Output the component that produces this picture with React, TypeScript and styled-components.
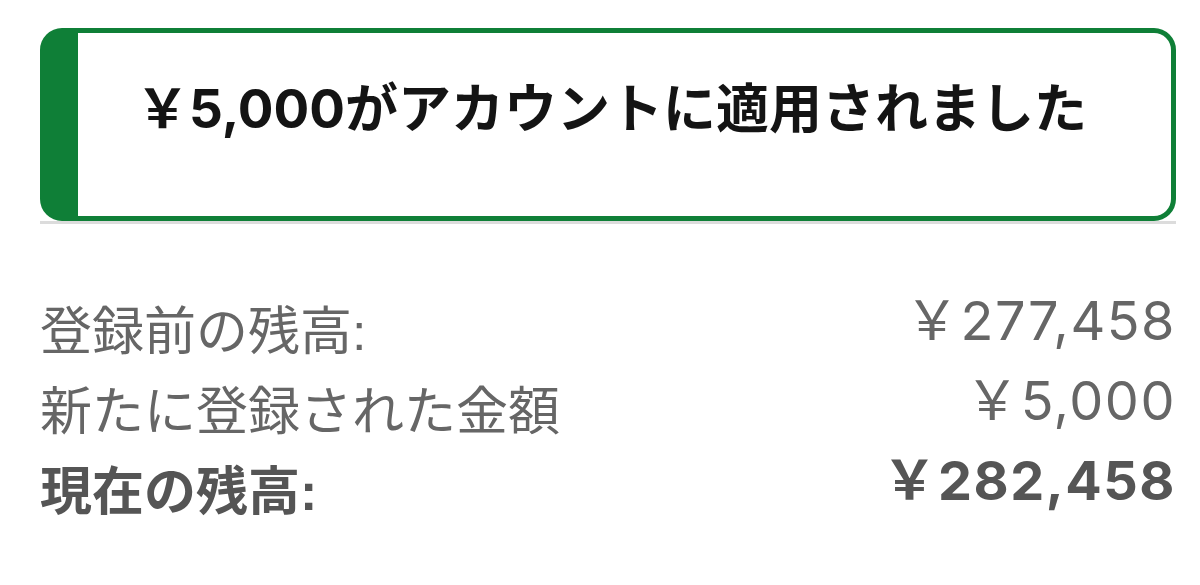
import React from "react";
import styled, { createGlobalStyle } from "styled-components";

const GlobalStyle = createGlobalStyle`
  html, body {
    margin: 0;
    padding: 0;
    background: #ffffff;
  }
  body {
    font-family: "Liberation Sans", "Noto Sans CJK JP", sans-serif;
  }
`;

const Page = styled.div`
  width: 1200px;
  height: 585px;
  box-sizing: border-box;
  padding: 28px 24px 0 40px;
  overflow: hidden;
`;

const NoticeWrap = styled.div`
  border-bottom: 3px solid #dcdcdc;
`;

const Notice = styled.div`
  box-sizing: border-box;
  height: 193px;
  border: 5px solid #0f7f37;
  border-left-width: 38px;
  border-radius: 22px;
  display: flex;
  justify-content: center;
  align-items: flex-start;
  padding: 44px 50px 0 24px;
`;

const NoticeText = styled.h1`
  margin: 0;
  font-family: "Liberation Sans", "Noto Sans CJK JP", sans-serif;
  font-size: 53px;
  line-height: 64px;
  font-weight: 700;
  color: #141414;
  white-space: nowrap;
`;

/* figures use a wider grotesque, like the system UI numerals */
const Amount = styled.span`
  font-family: Inter, "Noto Sans CJK JP", sans-serif;
`;

const Summary = styled.dl`
  margin: 76px 0 0 0;
  display: grid;
  grid-template-columns: 1fr auto;
  row-gap: 16px;
`;

const Label = styled.dt<{ $strong?: boolean }>`
  margin: 0;
  font-size: 52px;
  line-height: 64px;
  font-weight: ${(p) => (p.$strong ? 700 : 400)};
  color: ${(p) => (p.$strong ? "#555555" : "#666666")};
  white-space: nowrap;
`;

const Value = styled.dd<{ $strong?: boolean }>`
  margin: 0;
  text-align: right;
  font-family: Inter, "Noto Sans CJK JP", sans-serif;
  font-size: 54px;
  line-height: 64px;
  letter-spacing: 1.5px;
  font-weight: ${(p) => (p.$strong ? 700 : 400)};
  color: ${(p) => (p.$strong ? "#555555" : "#666666")};
  white-space: nowrap;
  transform: translateY(-11px);
`;

const rows = [
  { label: "登録前の残高:", value: "￥277,458" },
  { label: "新たに登録された金額", value: "￥5,000" },
  { label: "現在の残高:", value: "￥282,458", strong: true },
];

export default function App() {
  return (
    <>
      <GlobalStyle />
      <Page>
        <NoticeWrap>
          <Notice>
            <NoticeText>
              <Amount>￥5,000</Amount>がアカウントに適用されました
            </NoticeText>
          </Notice>
        </NoticeWrap>
        <Summary>
          {rows.map((r) => (
            <React.Fragment key={r.label}>
              <Label $strong={r.strong}>{r.label}</Label>
              <Value $strong={r.strong}>{r.value}</Value>
            </React.Fragment>
          ))}
        </Summary>
      </Page>
    </>
  );
}
